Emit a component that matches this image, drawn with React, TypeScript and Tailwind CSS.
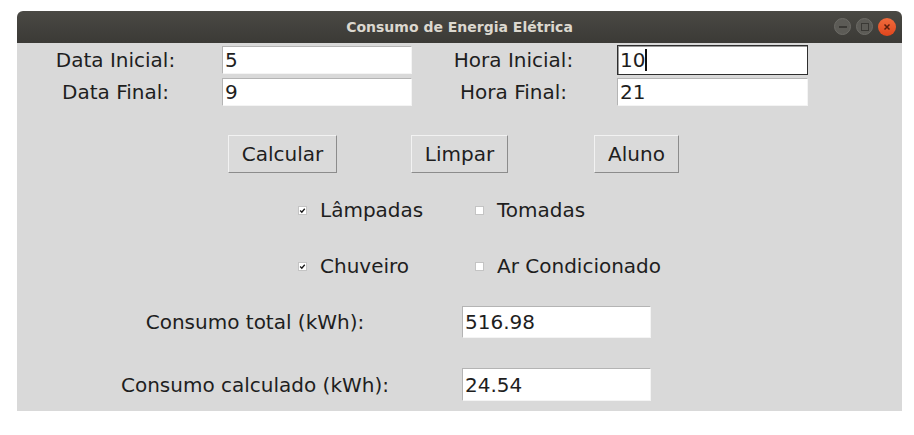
import React from 'react'

const font = { fontFamily: '"DejaVu Sans", "Liberation Sans", sans-serif' }

function Field({ value, focused = false, className = '' }: { value: string; focused?: boolean; className?: string }) {
  return (
    <div
      className={`bg-white flex items-center pl-[2px] text-[20px] leading-[24px] text-[#1e1e1e] ${
        focused
          ? 'border border-[#2e2e2e] shadow-[inset_1px_1px_0_#9a9a9a]'
          : 'border-t border-l border-[#b4b4b4] border-b-[#f4f4f4] border-r-[#f4f4f4] border-b border-r'
      } ${className}`}
    >
      <span>{value}</span>
      {focused && <span className="w-[2px] h-[22px] bg-[#111]" />}
    </div>
  )
}

function Btn({ label }: { label: string }) {
  return (
    <div className="w-[177px] flex justify-center">
      <button className="h-[38px] px-[13px] bg-[#dadada] text-[20px] leading-[24px] text-[#1e1e1e] border border-t-[#f2f2f2] border-l-[#f2f2f2] border-b-[#8c8c8c] border-r-[#8c8c8c]">
        {label}
      </button>
    </div>
  )
}

function Check({ label, checked }: { label: string; checked: boolean }) {
  return (
    <div className="w-[177px] flex items-center whitespace-nowrap">
      <div className="w-[9px] h-[9px] bg-white border border-[#c4c4c4] flex items-center justify-center shrink-0">
        {checked && (
          <svg width="9" height="9" viewBox="0 0 9 9">
            <path d="M1.5 4.5 L3.6 6.7 L7.4 2.2" stroke="#1a1a1a" strokeWidth="1.7" fill="none" />
          </svg>
        )}
      </div>
      <span className="ml-[13px] text-[20px] leading-[24px] text-[#1e1e1e]">{label}</span>
    </div>
  )
}

export default function App() {
  return (
    <div className="w-[914px] h-[435px] bg-white pt-[11px] pl-[17px]" style={font}>
      <div className="w-[885px] flex flex-col">
        {/* Title bar */}
        <div className="h-[32px] rounded-t-[6px] bg-gradient-to-b from-[#4a4944] to-[#3b3a36] flex items-center relative">
          <div className="flex-1 text-center text-[14px] font-bold text-[#dcd8cf]">
            Consumo de Energia Elétrica
          </div>
          <div className="absolute right-[6px] top-[7px] flex gap-[5px]">
            <div className="w-[17px] h-[17px] rounded-full bg-[#5c5b56] border border-[#6c6b66] flex items-center justify-center">
              <div className="w-[8px] h-[2px] bg-[#3a3935]" />
            </div>
            <div className="w-[17px] h-[17px] rounded-full bg-[#5c5b56] border border-[#6c6b66] flex items-center justify-center">
              <div className="w-[8px] h-[8px] border-[1.5px] border-[#3a3935]" />
            </div>
            <div className="w-[18px] h-[18px] -mt-[0.5px] rounded-full bg-gradient-to-b from-[#f06b3c] to-[#e1451c] flex items-center justify-center">
              <svg width="8" height="8" viewBox="0 0 8 8">
                <path d="M1.5 1.5 L6.5 6.5 M6.5 1.5 L1.5 6.5" stroke="#5a1e0c" strokeWidth="1.5" />
              </svg>
            </div>
          </div>
        </div>

        {/* Body */}
        <div className="h-[368px] bg-[#d9d9d9] text-[20px] leading-[24px] text-[#1e1e1e] pt-[3px]">
          <div className="flex items-center h-[28px]">
            <div className="w-[197px] text-center">Data Inicial:</div>
            <Field value="5" className="ml-[8px] w-[190px] h-[28px]" />
            <div className="w-[203px] text-center">Hora Inicial:</div>
            <Field value="10" focused className="ml-[2px] w-[191px] h-[30px]" />
          </div>
          <div className="flex items-center h-[28px] mt-[4px]">
            <div className="w-[197px] text-center">Data Final:</div>
            <Field value="9" className="ml-[8px] w-[190px] h-[28px]" />
            <div className="w-[203px] text-center">Hora Final:</div>
            <Field value="21" className="ml-[2px] w-[191px] h-[28px]" />
          </div>

          <div className="flex mt-[29px] pl-[177px]">
            <Btn label="Calcular" />
            <Btn label="Limpar" />
            <Btn label="Aluno" />
          </div>

          <div className="flex items-center h-[30px] mt-[22px] pl-[281px]">
            <Check label="Lâmpadas" checked />
            <Check label="Tomadas" checked={false} />
          </div>
          <div className="flex items-center h-[30px] mt-[26px] pl-[281px]">
            <Check label="Chuveiro" checked />
            <Check label="Ar Condicionado" checked={false} />
          </div>

          <div className="flex items-center h-[32px] mt-[25px]">
            <div className="ml-[93px] w-[290px] text-center">Consumo total (kWh):</div>
            <Field value="516.98" className="ml-[62px] w-[189px] h-[32px]" />
          </div>
          <div className="flex items-center h-[33px] mt-[30px]">
            <div className="ml-[93px] w-[290px] text-center">Consumo calculado (kWh):</div>
            <Field value="24.54" className="ml-[62px] w-[189px] h-[33px]" />
          </div>
        </div>
      </div>
    </div>
  )
}
